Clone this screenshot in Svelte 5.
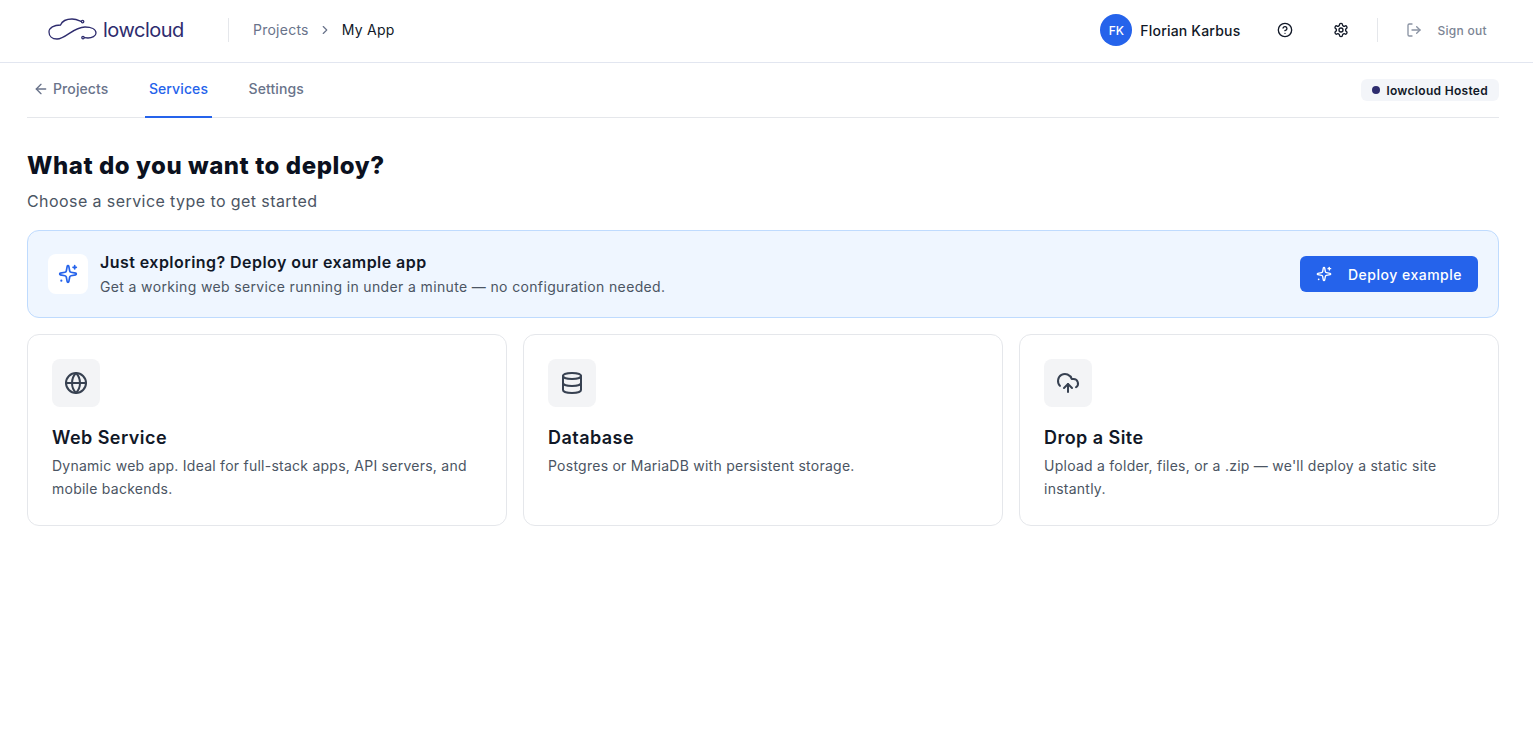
<script>
  const cards = [
    { title: 'Web Service', desc: 'Dynamic web app. Ideal for full-stack apps, API servers, and mobile backends.', icon: 'globe' },
    { title: 'Database', desc: 'Postgres or MariaDB with persistent storage.', icon: 'db' },
    { title: 'Drop a Site', desc: "Upload a folder, files, or a .zip — we'll deploy a static site instantly.", icon: 'cloud' }
  ];
</script>

{#snippet sparkles(size)}
  <svg width={size} height={size} viewBox="0 0 24 24" fill="none" stroke="currentColor" stroke-width="2" stroke-linecap="round" stroke-linejoin="round">
    <path d="M11.017 2.814a1 1 0 0 1 1.966 0l1.051 5.558a2 2 0 0 0 1.594 1.594l5.558 1.051a1 1 0 0 1 0 1.966l-5.558 1.051a2 2 0 0 0-1.594 1.594l-1.051 5.558a1 1 0 0 1-1.966 0l-1.051-5.558a2 2 0 0 0-1.594-1.594l-5.558-1.051a1 1 0 0 1 0-1.966l5.558-1.051a2 2 0 0 0 1.594-1.594z"/>
    <path d="M20 2v4"/><path d="M22 4h-4"/><circle cx="4" cy="20" r="1.3" fill="currentColor" stroke="none"/>
  </svg>
{/snippet}

<header class="top">
  <div class="brand">
    <svg class="mark" width="54" height="24" viewBox="47 19 54 24" fill="none" stroke="#2e2c6e" stroke-width="1.3" stroke-linecap="round">
      <path d="M81 22.3C78 21 76 20 72 20C66 20 62 22.5 60.5 26C54 26 49 28.5 49 33C49 37 52 40 57 40C66 40 73 28 85 28C91 28 96 30 96 34C96 37 92 39 88 39L84.5 38.7"/>
      <circle cx="82.6" cy="22.6" r="1.2"/><circle cx="83" cy="38.6" r="1.2"/>
    </svg>
    <span class="word">lowcloud</span>
  </div>
  <span class="rule"></span>
  <nav class="crumbs">
    <span class="crumb">Projects</span>
    <svg width="14" height="14" viewBox="0 0 24 24" fill="none" stroke="#69738a" stroke-width="2" stroke-linecap="round" stroke-linejoin="round"><path d="m9 18 6-6-6-6"/></svg>
    <span class="crumb current">My App</span>
  </nav>
  <div class="user">
    <span class="avatar">FK</span>
    <span class="name">Florian Karbus</span>
    <span class="tool first">
      <svg width="16" height="16" viewBox="0 0 24 24" fill="none" stroke="currentColor" stroke-width="2" stroke-linecap="round" stroke-linejoin="round"><circle cx="12" cy="12" r="10"/><path d="M9.09 9a3 3 0 0 1 5.83 1c0 2-3 3-3 3"/><path d="M12 17h.01"/></svg>
    </span>
    <span class="tool">
      <svg width="16" height="16" viewBox="0 0 24 24" fill="none" stroke="currentColor" stroke-width="2" stroke-linecap="round" stroke-linejoin="round"><path d="M12.22 2h-.44a2 2 0 0 0-2 2v.18a2 2 0 0 1-1 1.73l-.43.25a2 2 0 0 1-2 0l-.15-.08a2 2 0 0 0-2.73.73l-.22.38a2 2 0 0 0 .73 2.73l.15.1a2 2 0 0 1 1 1.72v.51a2 2 0 0 1-1 1.74l-.15.09a2 2 0 0 0-.73 2.73l.22.38a2 2 0 0 0 2.73.73l.15-.08a2 2 0 0 1 2 0l.43.25a2 2 0 0 1 1 1.73V20a2 2 0 0 0 2 2h.44a2 2 0 0 0 2-2v-.18a2 2 0 0 1 1-1.73l.43-.25a2 2 0 0 1 2 0l.15.08a2 2 0 0 0 2.73-.73l.22-.39a2 2 0 0 0-.73-2.73l-.15-.08a2 2 0 0 1-1-1.74v-.5a2 2 0 0 1 1-1.74l.15-.09a2 2 0 0 0 .73-2.73l-.22-.38a2 2 0 0 0-2.73-.73l-.15.08a2 2 0 0 1-2 0l-.43-.25a2 2 0 0 1-1-1.73V4a2 2 0 0 0-2-2z"/><circle cx="12" cy="12" r="3"/></svg>
    </span>
    <span class="rule user-rule"></span>
    <span class="signout">
      <svg width="16" height="16" viewBox="0 0 24 24" fill="none" stroke="currentColor" stroke-width="2" stroke-linecap="round" stroke-linejoin="round"><path d="M9 21H5a2 2 0 0 1-2-2V5a2 2 0 0 1 2-2h4"/><path d="m16 17 5-5-5-5"/><path d="M21 12H9"/></svg>
      <span class="signout-text">Sign out</span>
    </span>
  </div>
</header>

<main class="page">
  <div class="tabs">
    <span class="tab back">
      <svg width="16" height="16" viewBox="0 0 24 24" fill="none" stroke="currentColor" stroke-width="2" stroke-linecap="round" stroke-linejoin="round"><path d="m12 19-7-7 7-7"/><path d="M19 12H5"/></svg>
      Projects
    </span>
    <span class="tab active">Services</span>
    <span class="tab">Settings</span>
    <span class="badge"><i class="dot"></i>lowcloud Hosted</span>
  </div>

  <h1>What do you want to deploy?</h1>
  <p class="sub">Choose a service type to get started</p>

  <section class="banner">
    <span class="spark">{@render sparkles(20)}</span>
    <div class="banner-text">
      <strong>Just exploring? Deploy our example app</strong>
      <span>Get a working web service running in under a minute — no configuration needed.</span>
    </div>
    <button class="deploy">{@render sparkles(16)}<span>Deploy example</span></button>
  </section>

  <section class="grid">
    {#each cards as c}
      <article class="card">
        <span class="icon">
          <svg width="24" height="24" viewBox="0 0 24 24" fill="none" stroke="currentColor" stroke-width="2" stroke-linecap="round" stroke-linejoin="round">
            {#if c.icon === 'globe'}
              <circle cx="12" cy="12" r="10"/><path d="M12 2a14.5 14.5 0 0 0 0 20 14.5 14.5 0 0 0 0-20"/><path d="M2 12h20"/>
            {:else if c.icon === 'db'}
              <ellipse cx="12" cy="5" rx="9" ry="3"/><path d="M3 5V19A9 3 0 0 0 21 19V5"/><path d="M3 12A9 3 0 0 0 21 12"/>
            {:else}
              <path d="M12 13v8"/><path d="M4 14.899A7 7 0 1 1 15.71 8h1.79a4.5 4.5 0 0 1 2.5 8.242"/><path d="m8 17 4-4 4 4"/>
            {/if}
          </svg>
        </span>
        <h2>{c.title}</h2>
        <p>{c.desc}</p>
      </article>
    {/each}
  </section>
</main>

<style>
  :global(body) { margin: 0; background: #fff; font-family: Inter, "Noto Sans", sans-serif; color: #111827; }
  .top { display: flex; align-items: center; height: 60px; padding: 0 46px 2px 48px; border-bottom: 1px solid #e2e6f0; }
  .brand { display: flex; align-items: center; gap: 2px; width: 180px; }
  .mark { display: block; margin-left: -1px; }
  .word { font-size: 20px; font-weight: 400; color: #2e2c6e; letter-spacing: -0.5px; }
  .rule { width: 1px; height: 24px; background: #e5e7eb; }
  .crumbs { display: flex; align-items: center; gap: 9.5px; margin-left: 24px; font-size: 14px; line-height: 18px; }
  .crumb { color: #69738a; letter-spacing: 0.25px; }
  .crumb.current { color: #111827; }
  .user { margin-left: auto; display: flex; align-items: center; }
  .avatar { width: 32px; height: 32px; border-radius: 50%; background: #2563eb; color: #fff; display: flex; align-items: center; justify-content: center; font-size: 12px; font-weight: 500; }
  .name { margin-left: 8px; font-size: 14px; font-weight: 500; letter-spacing: 0.2px; }
  .tool { display: flex; margin-left: 40px; color: #111827; }
  .tool.first { margin-left: 37px; }
  .user-rule { margin-left: 28px; }
  .signout { display: flex; align-items: center; gap: 15px; margin-left: 28px; color: #8a93a3; }
  .signout-text { font-size: 12px; font-weight: 500; color: #7b8494; letter-spacing: 0.3px; }
  .page { padding: 0 34px 0 27px; }
  .tabs { display: flex; align-items: center; gap: 32.5px; height: 54px; border-bottom: 1px solid #e5e7eb; padding-left: 2px; }
  .tab { position: relative; height: 51px; padding: 0 4px 3px; display: flex; align-items: center; gap: 4px; font-size: 14px; font-weight: 500; color: #69738a; letter-spacing: 0.1px; }
  .tab.active { color: #2563eb; }
  .tab.active::after { content: ""; position: absolute; left: 0; right: 0; bottom: -1px; height: 2px; background: #2563eb; }
  .badge { margin-left: auto; display: flex; align-items: center; gap: 6px; height: 22px; padding: 0 11px; border-radius: 6px; background: #f3f5f9; font-size: 12px; font-weight: 600; color: #111827; letter-spacing: 0.3px; }
  .dot { width: 8px; height: 8px; border-radius: 50%; background: #2e2c6e; }
  h1 { margin: 32px 0 0; font-size: 24px; line-height: 32px; font-weight: 800; color: #0b1120; letter-spacing: 0.55px; }
  .sub { margin: 7px 0 0; font-size: 16px; line-height: 24px; color: #4b5563; letter-spacing: 0.42px; }
  .banner { margin-top: 17px; height: 88px; box-sizing: border-box; display: flex; align-items: center; padding: 0 20px; border: 1px solid #bfdbfe; border-radius: 12px; background: #eff6ff; }
  .spark { width: 40px; height: 40px; border-radius: 8px; background: #fff; color: #2563eb; display: flex; align-items: center; justify-content: center; }
  .banner-text { margin-left: 12px; display: flex; flex-direction: column; gap: 5px; }
  .banner-text strong { font-size: 16px; line-height: 20px; font-weight: 600; color: #111827; letter-spacing: 0.45px; }
  .banner-text span { font-size: 14px; line-height: 20px; color: #4b5563; letter-spacing: 0.36px; }
  .deploy { margin-left: auto; display: flex; align-items: center; gap: 16px; height: 36px; padding: 0 16px; border: 0; border-radius: 6px; background: #2563eb; color: #fff; font: 500 14px Inter, sans-serif; letter-spacing: 0.5px; }
  .grid { margin-top: 16px; display: grid; grid-template-columns: repeat(3, 1fr); gap: 16px; }
  .card { height: 192px; box-sizing: border-box; padding: 24px; border: 1px solid #e5e7eb; border-radius: 12px; }
  .icon { width: 48px; height: 48px; border-radius: 8px; background: #f3f4f6; color: #374151; display: flex; align-items: center; justify-content: center; }
  h2 { margin: 17px 0 0; font-size: 18px; line-height: 28px; font-weight: 600; color: #111827; letter-spacing: 0.45px; }
  .card p { margin: 2px 0 0; font-size: 14px; line-height: 23px; color: #4b5563; letter-spacing: 0.25px; }
</style>
